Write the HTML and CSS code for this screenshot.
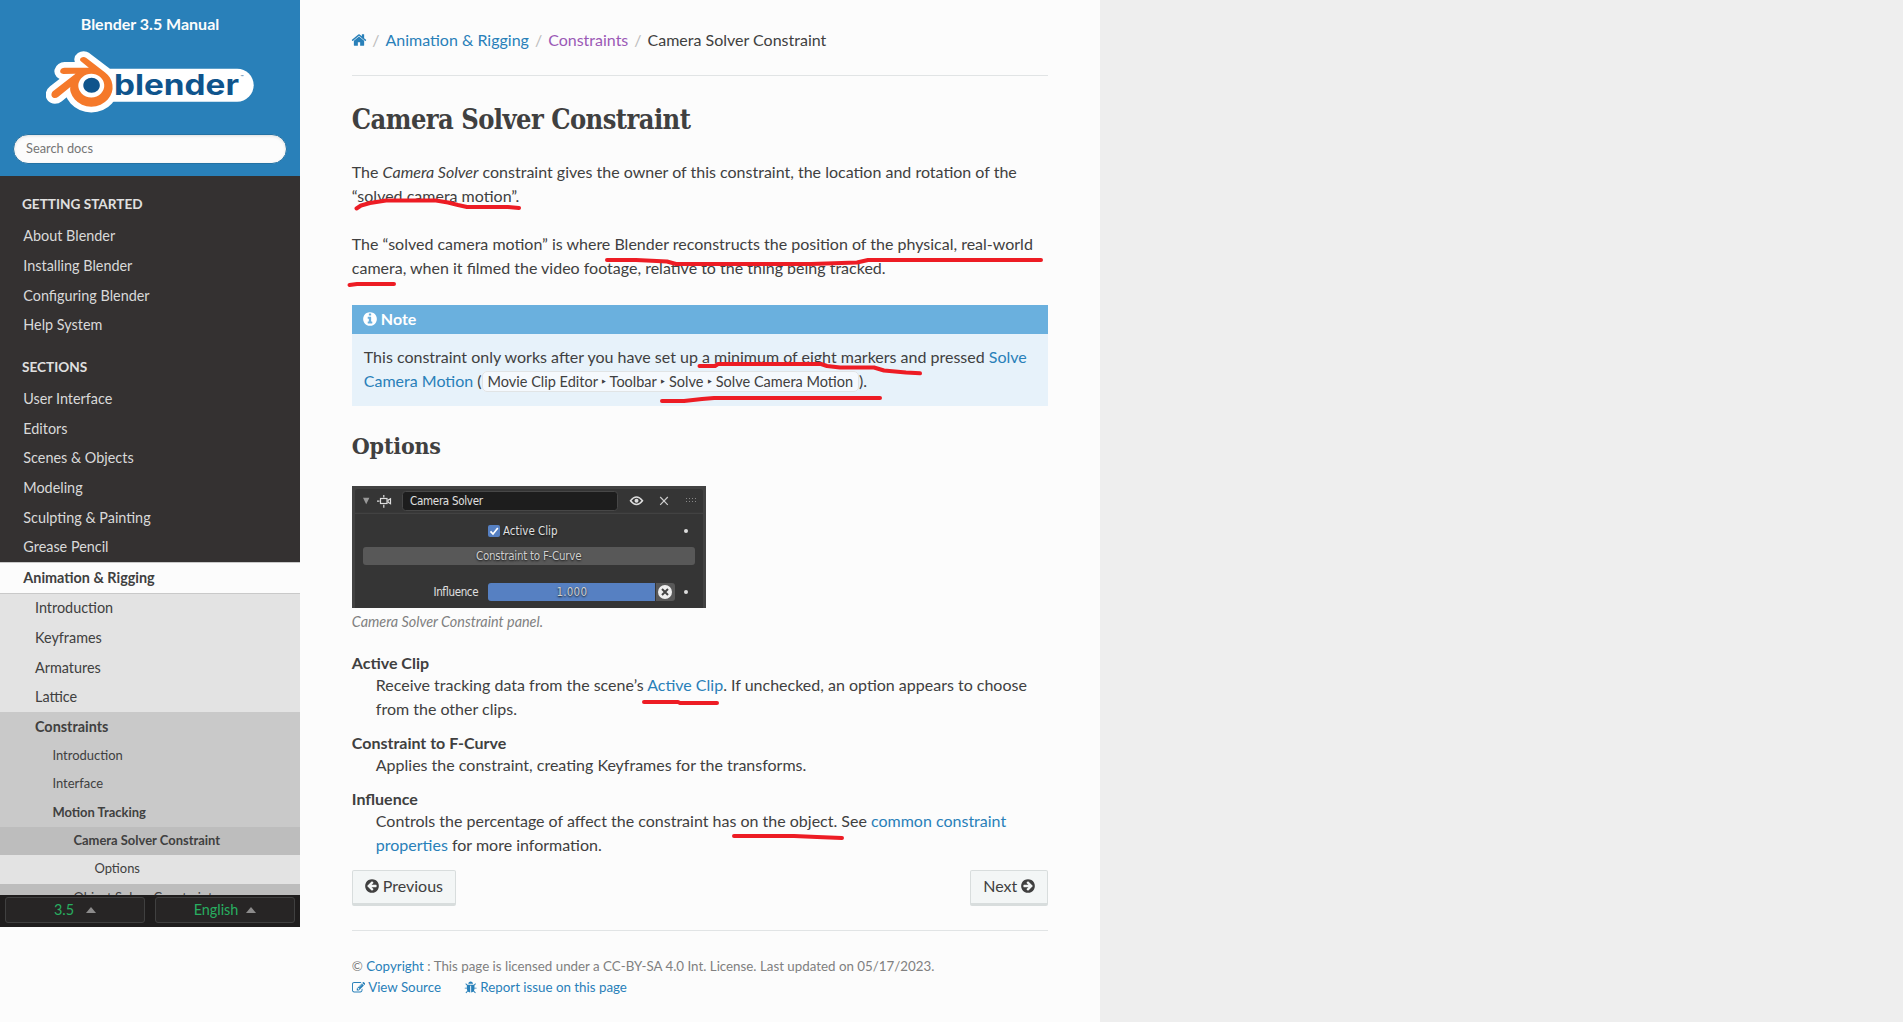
FILE: index.html
```html
<!DOCTYPE html>
<html lang="en">
<head>
<meta charset="utf-8">
<title>Camera Solver Constraint — Blender Manual</title>
<link rel="stylesheet" href="styles.css">
</head>
<body>
<svg class="defs" width="0" height="0">
  <symbol id="i-home" viewBox="0 0 1792 1792"><path d="M1472 992v480q0 26-19 45t-45 19h-384v-384h-256v384h-384q-26 0-45-19t-19-45v-480q0-1 .5-3t.5-3l575-474 575 474q1 2 1 6zm223-69l-62 74q-8 9-21 11h-3q-13 0-21-7l-692-577-692 577q-12 8-24 7-13-2-21-11l-62-74q-8-10-7-23.5t11-21.5l719-599q32-26 76-26t76 26l244 204v-195q0-14 9-23t23-9h192q14 0 23 9t9 23v408l219 182q10 8 11 21.5t-7 23.5z"/></symbol>
  <symbol id="i-info" viewBox="0 0 1792 1792"><path d="M1152 1376v-160q0-14-9-23t-23-9h-96v-512q0-14-9-23t-23-9h-320q-14 0-23 9t-9 23v160q0 14 9 23t23 9h96v320h-96q-14 0-23 9t-9 23v160q0 14 9 23t23 9h448q14 0 23-9t9-23zm-128-896v-160q0-14-9-23t-23-9h-192q-14 0-23 9t-9 23v160q0 14 9 23t23 9h192q14 0 23-9t9-23zm640 416q0 209-103 385.5t-279.5 279.5-385.5 103-385.5-103-279.5-279.5-103-385.5 103-385.5 279.5-279.5 385.5-103 385.5 103 279.5 279.5 103 385.5z"/></symbol>
  <symbol id="i-arrow" viewBox="0 0 1792 1792"><path d="M1413 896q0-27-18-45l-91-91-362-362q-18-18-45-18t-45 18l-91 91q-18 18-18 45t18 45l189 189h-502q-26 0-45 19t-19 45v128q0 26 19 45t45 19h502l-189 189q-18 18-18 45t18 45l91 91q18 18 45 18t45-18l362-362 91-91q18-18 18-45zm251 0q0 209-103 385.5t-279.5 279.5-385.5 103-385.5-103-279.5-279.5-103-385.5 103-385.5 279.5-279.5 385.5-103 385.5 103 279.5 279.5 103 385.5z"/></symbol>
  <symbol id="i-edit" viewBox="0 0 1792 1792"><path d="M888 1184l116-116-152-152-116 116v56h96v96h56zm440-720q-16-16-33 1l-350 350q-17 17-1 33t33-1l350-350q17-17 1-33zm80 594v190q0 119-84.5 203.5t-203.5 84.5h-832q-119 0-203.5-84.5t-84.5-203.5v-832q0-119 84.5-203.5t203.5-84.5h832q63 0 117 25 15 7 18 23 3 17-9 29l-49 49q-14 14-32 8-23-6-45-6h-832q-66 0-113 47t-47 113v832q0 66 47 113t113 47h832q66 0 113-47t47-113v-126q0-13 9-22l64-64q15-15 35-7t20 29zm-96-738l288 288-672 672h-288v-288zm444 132l-92 92-288-288 92-92q28-28 68-28t68 28l152 152q28 28 28 68t-28 68z"/></symbol>
  <symbol id="i-bug" viewBox="0 0 1792 1792"><path d="M1696 960q0 26-19 45t-45 19h-224q0 171-67 290l208 209q19 19 19 45t-19 45q-18 19-45 19t-45-19l-198-197q-5 5-15 13t-42 28.5-65 36.5-82 29-97 13v-896h-128v896q-51 0-101.5-13.5t-87-33-66-39-43.5-32.5l-15-14-183 207q-20 21-48 21-24 0-43-16-19-18-20.5-44.5t15.5-46.5l202-227q-58-114-58-274h-224q-26 0-45-19t-19-45 19-45 45-19h224v-294l-173-173q-19-19-19-45t19-45 45-19 45 19l173 173h844l173-173q19-19 45-19t45 19 19 45-19 45l-173 173v294h224q26 0 45 19t19 45zm-480-576h-640q0-133 93.5-226.5t226.5-93.5 226.5 93.5 93.5 226.5z"/></symbol>
</svg>

<div class="page">
  <nav class="side">
    <header class="side-head">
      <a class="project">Blender 3.5 Manual</a>
      <svg class="logo" width="208" height="62" viewBox="46 51 208 62">
        <rect x="84" y="68.7" width="169.7" height="33" rx="16.5" fill="#fff"/>
        <g transform="translate(51.4 51.2) scale(2.55)">
          <path fill="#f5792a" stroke="#fff" stroke-width="4.5" stroke-linejoin="round" paint-order="stroke" d="M7.35 14.831c.006.314.106.922.256 1.398a7.372 7.372 0 0 0 1.593 2.757 8.227 8.227 0 0 0 2.787 2.001 8.947 8.947 0 0 0 3.66.76 8.964 8.964 0 0 0 3.657-.772 8.285 8.285 0 0 0 2.785-2.01 7.428 7.428 0 0 0 1.592-2.762 6.964 6.964 0 0 0 .25-3.074 7.123 7.123 0 0 0-1.016-2.779 7.764 7.764 0 0 0-1.852-2.043h.002L13.566 2.55l-.02-.015c-.492-.378-1.319-.376-1.86.002-.547.382-.609 1.015-.123 1.415l-.001.001 3.126 2.543-9.53.01h-.013c-.788.001-1.545.518-1.695 1.172-.154.665.38 1.217 1.2 1.22V8.9l4.83-.01-8.62 6.617-.034.025c-.813.622-1.075 1.658-.563 2.313.52.667 1.625.668 2.447.004L7.414 14s-.069.52-.063.831zm12.09 1.741c-.97.988-2.326 1.548-3.795 1.55-1.47.004-2.827-.552-3.797-1.538a4.51 4.51 0 0 1-1.036-1.622 4.282 4.282 0 0 1 .282-3.519 4.702 4.702 0 0 1 1.153-1.371c.942-.768 2.141-1.183 3.396-1.185 1.256-.002 2.455.41 3.398 1.175.48.391.87.854 1.152 1.367a4.28 4.28 0 0 1 .522 1.706 4.236 4.236 0 0 1-.239 1.811 4.54 4.54 0 0 1-1.035 1.626"/>
          <path fill="#0f548c" d="M12.51 13.214c.046-.8.438-1.506 1.03-2.006a3.424 3.424 0 0 1 2.212-.79c.85 0 1.631.3 2.211.79.592.5.983 1.206 1.028 2.005.045.823-.285 1.586-.865 2.153a3.389 3.389 0 0 1-2.374.938 3.393 3.393 0 0 1-2.376-.938c-.58-.567-.91-1.33-.865-2.152"/>
        </g>
        <text class="logo-word" x="114" y="95" textLength="125" lengthAdjust="spacingAndGlyphs">blender</text>
        <text class="logo-tm" x="240.5" y="79">™</text>
      </svg>
      <input class="search" type="text" placeholder="Search docs">
    </header>
    <div class="menu">
      <p class="caption">Getting Started</p>
      <ul>
        <li>About Blender</li>
        <li>Installing Blender</li>
        <li>Configuring Blender</li>
        <li>Help System</li>
      </ul>
      <p class="caption">Sections</p>
      <ul>
        <li>User Interface</li>
        <li>Editors</li>
        <li>Scenes &amp; Objects</li>
        <li>Modeling</li>
        <li>Sculpting &amp; Painting</li>
        <li>Grease Pencil</li>
        <li class="current">Animation &amp; Rigging</li>
        <li class="l2">Introduction</li>
        <li class="l2">Keyframes</li>
        <li class="l2">Armatures</li>
        <li class="l2">Lattice</li>
        <li class="l2 open">Constraints</li>
        <li class="l3">Introduction</li>
        <li class="l3">Interface</li>
        <li class="l3 bold">Motion Tracking</li>
        <li class="l4 bold">Camera Solver Constraint</li>
        <li class="l5">Options</li>
        <li class="l4">Object Solver Constraint</li>
      </ul>
    </div>
    <footer class="versions">
      <span class="picker">3.5<i class="caret"></i></span>
      <span class="picker">English<i class="caret"></i></span>
    </footer>
  </nav>

  <main class="content">
    <div class="crumbs">
      <a><svg class="icon"><use href="#i-home"/></svg></a><span class="sep">/</span><a>Animation &amp; Rigging</a><span class="sep">/</span><a class="visited">Constraints</a><span class="sep">/</span><span>Camera Solver Constraint</span>
    </div>
    <hr>
    <h1>Camera Solver Constraint</h1>
    <p>The <em>Camera Solver</em> constraint gives the owner of this constraint, the location and rotation of the “solved camera motion”.</p>
    <p>The “solved camera motion” is where Blender reconstructs the position of the physical, real-world camera, when it filmed the video footage, relative to the thing being tracked.</p>
    <div class="note">
      <p class="note-title"><svg class="icon"><use href="#i-info"/></svg>Note</p>
      <p class="note-body">This constraint only works after you have set up a minimum of eight markers and pressed <a>Solve Camera Motion</a> (<span class="menusel">Movie Clip Editor ‣ Toolbar ‣ Solve ‣ Solve Camera Motion</span>).</p>
    </div>
    <h2>Options</h2>
    <figure>
      <svg class="panel" width="354" height="122" viewBox="0 0 354 122">
        <rect width="354" height="122" fill="#424242"/>
        <path d="M3 122V6q0-3 3-3h342q3 0 3 3v116z" fill="#353535"/>
        <path d="M3 27.3h348" stroke="#464646"/>
        <path d="M11 11.7h6.4l-3.2 6.6z" fill="#999"/>
        <g fill="none" stroke="#ddd" stroke-width="1.2">
          <rect x="28.5" y="12.5" width="6.5" height="5"/>
          <path d="M25 15.2h2.5M31.8 9v2.5M31.8 18.8v3M38.5 12.7v5l-2.5-1.5v-2z"/>
        </g>
        <rect x="50.5" y="5.5" width="215" height="19" rx="3" fill="#1d1d1d" stroke="#474747"/>
        <text x="58" y="19" textLength="73">Camera Solver</text>
        <path d="M278.5 14.8q6-7.5 12 0q-6 7.5-12 0z" fill="none" stroke="#ddd" stroke-width="1.5"/>
        <circle cx="284.5" cy="14.8" r="2" fill="#ddd"/>
        <path d="M308.2 11l7.6 7.8m0-7.8l-7.6 7.8" stroke="#ccc" stroke-width="1.2"/>
        <path d="M334 12.5h11M334 15.5h11" stroke="#888" stroke-dasharray="1 2"/>
        <rect x="136" y="39" width="12" height="12" rx="2" fill="#5680c2"/>
        <path d="M138.5 45.3l2.5 2.7 4.8-6" fill="none" stroke="#fff" stroke-width="1.7"/>
        <text class="shaded" x="151" y="49" textLength="54.5">Active Clip</text>
        <circle cx="334" cy="45" r="2" fill="#ddd"/>
        <rect x="11" y="61" width="332" height="18" rx="3" fill="#585858"/>
        <text class="shaded dim" x="124" y="74" textLength="105.5">Constraint to F-Curve</text>
        <text x="81.5" y="110" textLength="45">Influence</text>
        <path d="M139 97h164v18H139q-3 0-3-3v-12q0-3 3-3z" fill="#5680c2"/>
        <path d="M304 97h16q3 0 3 3v12q0 3-3 3h-16z" fill="#585858"/>
        <circle cx="313" cy="106" r="7" fill="#eee"/>
        <path d="M310 103l6 6m0-6l-6 6" stroke="#444" stroke-width="2"/>
        <text class="shaded dim" x="204.5" y="110" textLength="30.5">1.000</text>
        <circle cx="334" cy="106" r="2" fill="#ddd"/>
      </svg>
      <figcaption>Camera Solver Constraint panel.</figcaption>
    </figure>
    <dl>
      <dt>Active Clip</dt>
      <dd>Receive tracking data from the scene’s <a>Active Clip</a>. If unchecked, an option appears to choose from the other clips.</dd>
      <dt>Constraint to F-Curve</dt>
      <dd>Applies the constraint, creating Keyframes for the transforms.</dd>
      <dt>Influence</dt>
      <dd>Controls the percentage of affect the constraint has on the object. See <a>common constraint properties</a> for more information.</dd>
    </dl>
    <div class="pager">
      <a class="btn"><svg class="icon flip"><use href="#i-arrow"/></svg>Previous</a>
      <a class="btn">Next<svg class="icon"><use href="#i-arrow"/></svg></a>
    </div>
    <hr>
    <footer class="legal">
      <div>© <a>Copyright</a> : This page is licensed under a CC-BY-SA 4.0 Int. License. Last updated on 05/17/2023.</div>
      <div class="tools"><a><svg class="icon"><use href="#i-edit"/></svg>View Source</a><a><svg class="icon"><use href="#i-bug"/></svg>Report issue on this page</a></div>
    </footer>
  </main>

  <svg class="marks" width="1100" height="1022" viewBox="0 0 1100 1022">
    <path d="M356.5 208.5L361 205.5L370 203L386 200.500H436L448 202.500L458 205L467 207H508L519 208"/>
    <path d="M607 260H636L667 261.500L676 264H811L857 262.500L868 260H1041"/>
    <path d="M349.500 285L357 284H394"/>
    <path d="M699.500 366H715L718 364H821L827 366L840 367.500H874L884 370.500L906 372.500L920 373.300"/>
    <path d="M662 401H684L702 399L714 398H880"/>
    <path d="M644 702H678L680 703H717"/>
    <path d="M734 836H794L817 837L842 838"/>
  </svg>
</div>
</body>
</html>
```
FILE: styles.css
```css
* { box-sizing: border-box; }
body { margin: 0; background: #eee; color: #404040; font: 16px/24px Lato, sans-serif; }
p, ul, h1, h2, dl, dd, figure { margin: 0; padding: 0; }
a { color: #2980b9; }
.defs { display: block; }
.page { position: relative; display: flex; align-items: flex-start; width: 1100px; height: 1022px; overflow: hidden; background: #fcfcfc; }

.side { display: flex; flex-direction: column; flex: none; width: 300px; height: 927px; background: #343131; }
.side-head { display: flex; flex-direction: column; align-items: center; flex: none; height: 176px; padding-top: 12px; background: #2980b9; }
.project { color: #fcfcfc; font-weight: 700; }
.logo { margin-top: 15px; }
.logo-word { font: 700 28px Inter, sans-serif; fill: #0f548c; }
.logo-tm { font: 5px Inter, sans-serif; fill: #0f548c; }
.search { width: 274px; height: 30px; margin-top: 21px; padding: 0 12px 2px; border: 1px solid #2472a4; border-radius: 50px; background: #fcfcfc; box-shadow: inset 0 1px 3px #ddd; font: 12.8px Lato, sans-serif; }
.search::placeholder { color: #757575; }

.menu { flex: 1; min-height: 0; overflow: hidden; color: #d9d9d9; }
.menu ul { list-style: none; }
.menu li { padding: 5.82px 23.3px; font-size: 14.4px; line-height: 18px; }
.caption { height: 33.6px; margin-top: 12px; padding: 0 22px; color: #e0e0e0; font-size: 13.6px; font-weight: 700; line-height: 32px; text-transform: uppercase; }
.menu .caption ~ .caption { height: 33.2px; margin-top: 11px; }
.menu .current { border: solid #c9c9c9; border-width: 1px 0; background: #fcfcfc; color: #404040; font-weight: 700; }
.menu .l2 { padding-left: 35px; background: #e3e3e3; color: #404040; }
.menu .open { background: #c9c9c9; font-weight: 700; }
.menu .l3, .menu .l4, .menu .l5 { padding-block: 4px 6.4px; color: #404040; font-size: 12.96px; }
.menu .l3 { padding-left: 52.4px; background: #c9c9c9; }
.menu .l4 { padding-left: 73.4px; background: #bdbdbd; }
.menu .l5 { padding-left: 94.4px; background: #e3e3e3; }
.menu .bold { font-weight: 700; }

.versions { display: flex; gap: 10px; flex: none; height: 32px; padding: 2px 5px 4px; background: #1f1d1d; }
.picker { display: flex; flex: 1; align-items: center; justify-content: center; gap: 12px; border: 1px solid #404040; border-radius: 3px; background: #272525; color: #27ae60; font-size: 14.4px; }
.picker + .picker { gap: 8px; }
.caret { border: 5px solid transparent; border-top: 0; border-bottom: 6px solid #8c8b8b; }

.content { width: 748.2px; padding: 28px 0 0 51.8px; }
.icon { width: 1em; height: 1em; fill: currentColor; vertical-align: -2px; }
.flip { transform: scaleX(-1); }
hr { height: 1px; margin: 0; border: 0; background: #e1e4e5; }
.crumbs { display: flex; height: 47px; }
.crumbs .icon { display: block; width: 16px; height: 16px; margin: 4px -.6px 0 -1px; }
.crumbs .sep { padding: 0 6px; color: #bbb; }
.visited { color: #9b59b6; }
h1, h2 { font-family: "Roboto Slab", "DejaVu Serif Condensed", "DejaVu Serif", serif; font-weight: 700; white-space: nowrap; }
h1 { height: 84px; padding-top: 28px; font-size: 27px; line-height: 32px; letter-spacing: -.55px; }
.content > p { height: 72px; }
.content > p + p { height: 73px; }
.note { height: 101px; background: #e7f2fa; }
.note-title { height: 29px; padding: 0 11px; background: #6ab0de; color: #fff; font-weight: 700; line-height: 28px; }
.note-title .icon { margin: 0 3px 0 -1px; }
.note-body { padding: 11px 12px; }
.menusel { padding: 1px 5px; border: 1px solid #e1e4e5; border-radius: 5px; background: #f5f9fd; font-size: 14.5px; }
h2 { height: 80px; padding-top: 26px; font-size: 23px; line-height: 28px; letter-spacing: -.2px; }
.panel { display: block; font: 11.5px "DejaVu Sans Condensed", "DejaVu Sans", sans-serif; }
.panel text { fill: #e0e0e0; }
.panel .shaded { text-shadow: 0 1px 2px #111; }
.panel .dim { fill: #d0d0d0; }
figcaption { height: 45px; padding-top: 2px; color: #808080; font-size: 14.4px; font-style: italic; }
dt { font-weight: 700; line-height: 20px; }
dd { margin: 0 0 12px 24px; }
.pager { display: flex; justify-content: space-between; margin-top: 13px; }
.btn { height: 36px; padding: 3px 12px; border: 1px solid #d8dddd; border-bottom-width: 3px; border-radius: 2px; background: #f3f6f6; color: #404040; }
.btn .icon { margin: 0 3px 0 -1px; }
.btn:last-child .icon { margin: 0 -1px 0 3px; }
.pager + hr { margin-top: 24px; }
.legal { padding-top: 25px; color: #808080; font-size: 13.33px; line-height: 21px; }
.legal .icon { margin-right: 3px; }
.tools { display: flex; gap: 23px; }
.marks { position: absolute; left: 0; top: 0; fill: none; stroke: #ed1c24; stroke-width: 4; stroke-linecap: round; stroke-linejoin: round; }
```
